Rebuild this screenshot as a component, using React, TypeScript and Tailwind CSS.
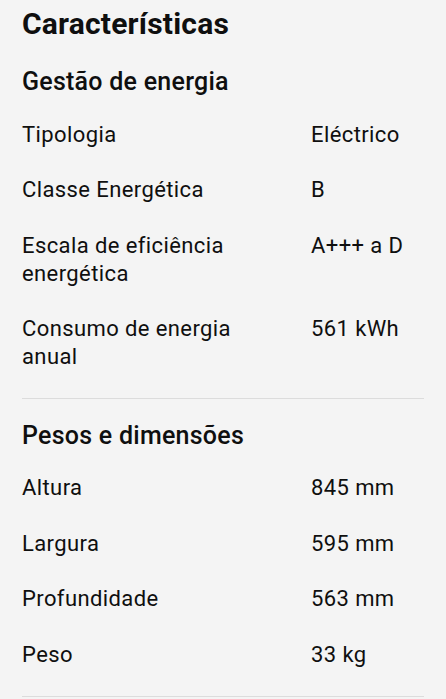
import React from "react";

type Spec = { label: string; value: string };

const sections: { title: string; items: Spec[] }[] = [
  {
    title: "Gestão de energia",
    items: [
      { label: "Tipologia", value: "Eléctrico" },
      { label: "Classe Energética", value: "B" },
      { label: "Escala de eficiência energética", value: "A+++ a D" },
      { label: "Consumo de energia anual", value: "561 kWh" },
    ],
  },
  {
    title: "Pesos e dimensões",
    items: [
      { label: "Altura", value: "845 mm" },
      { label: "Largura", value: "595 mm" },
      { label: "Profundidade", value: "563 mm" },
      { label: "Peso", value: "33 kg" },
    ],
  },
];

export default function App() {
  return (
    <div className="min-h-screen bg-[#f4f4f4] px-[22px] pt-[6px] font-['Roboto',sans-serif] text-[#0f0f0f]">
      <h1 className="text-[30px] font-bold leading-[36px] tracking-[0.2px]">Características</h1>

      <div className="mt-[25px]">
        {sections.map((section, i) => (
          <section
            key={section.title}
            className={`border-b border-[#dcdcdc] pb-[27px] ${i > 0 ? "pt-[21.5px]" : ""}`}
          >
            {/* Section heading */}
            <h2 className="text-[25px] font-medium leading-[30px] tracking-[0.25px]">{section.title}</h2>

            <div className="mt-[23.5px] flex flex-col gap-[27.5px]">
              {section.items.map((item) => (
                <div
                  key={item.label}
                  className="grid grid-cols-[240px_1fr] gap-x-[49px] text-[22px] leading-[28px] tracking-[0.4px]"
                >
                  <span>{item.label}</span>
                  <span>{item.value}</span>
                </div>
              ))}
            </div>
          </section>
        ))}
      </div>
    </div>
  );
}
